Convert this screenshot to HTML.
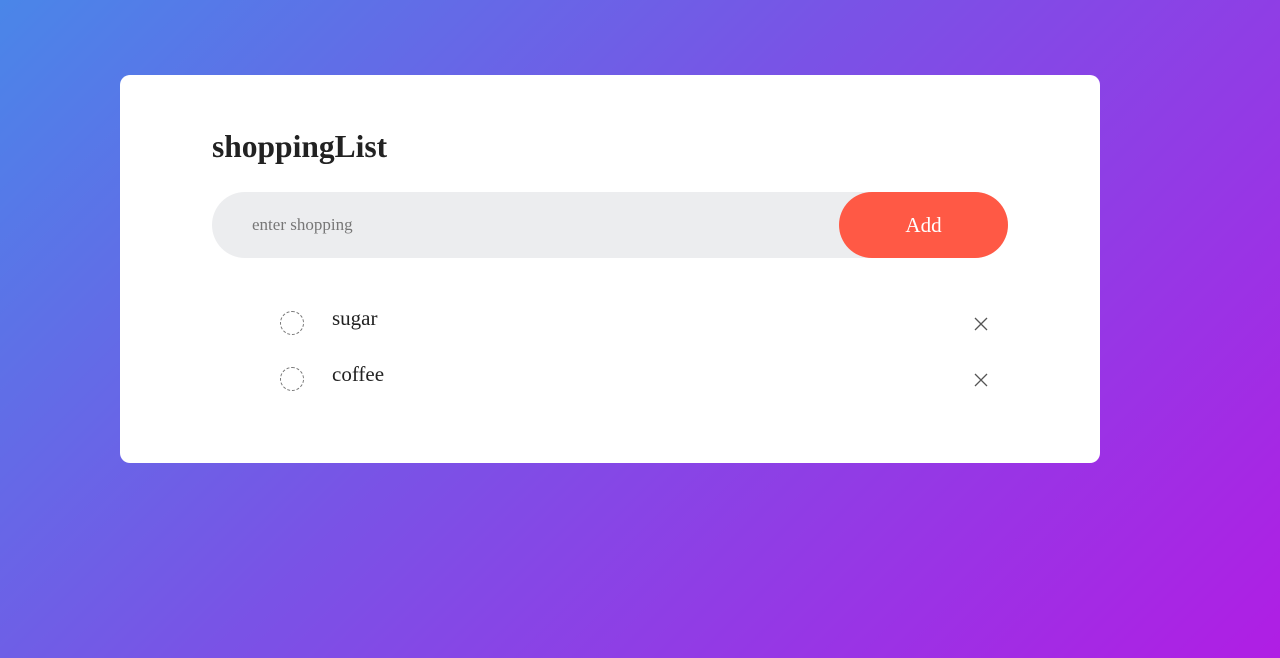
<!DOCTYPE html>
<html><head><style>
html,body{margin:0;padding:0;width:1280px;height:658px;overflow:hidden}
body{background:linear-gradient(135deg,#4a86e8 0%,#7a52e6 45%,#b01ee4 100%);font-family:"Liberation Serif",serif;position:relative}
.card{position:absolute;left:120px;top:75px;width:980px;height:388px;background:#fff;border-radius:10px}
h1{position:absolute;left:92px;top:54px;margin:0;font-size:31.5px;font-weight:bold;color:#222;line-height:36px}
.inp{position:absolute;left:92px;top:117px;width:796px;height:66px;background:#ecedef;border-radius:33px}
.ph{position:absolute;left:40px;top:23px;font-size:17px;color:#777;line-height:20px}
.btn{position:absolute;right:0;top:0;width:169px;height:66px;background:#ff5945;border-radius:33px;color:#fff;font-size:21px;text-align:center;line-height:66px}
.item{position:absolute;left:160px;font-size:21px;color:#222;line-height:24px}
.c{position:absolute;width:22px;height:22px;border:1px dashed #777;border-radius:50%}
.x{position:absolute;width:14px;height:14px}
</style></head><body>
<div class="card">
<h1>shoppingList</h1>
<div class="inp"><div class="ph">enter shopping</div><div class="btn">Add</div></div>
<div class="c" style="left:160px;top:236px"></div>
<div class="item" style="left:212px;top:231px">sugar</div>
<svg class="x" style="left:854px;top:242px" viewBox="0 0 14 14"><path d="M1 1L13 13M13 1L1 13" stroke="#555" stroke-width="1.3"/></svg>
<div class="c" style="left:160px;top:292px"></div>
<div class="item" style="left:212px;top:287px">coffee</div>
<svg class="x" style="left:854px;top:298px" viewBox="0 0 14 14"><path d="M1 1L13 13M13 1L1 13" stroke="#555" stroke-width="1.3"/></svg>
</div>
</body></html>
